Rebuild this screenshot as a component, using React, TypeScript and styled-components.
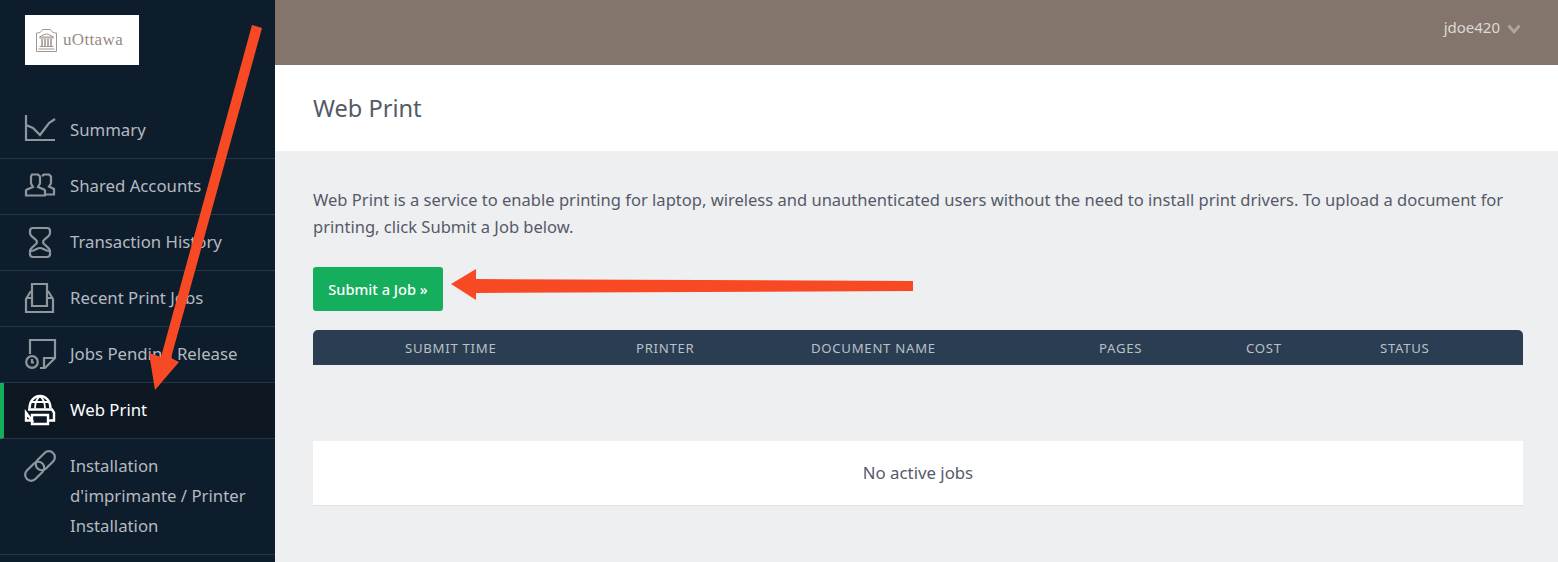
import React from "react";
import styled, { createGlobalStyle } from "styled-components";

const FONT = `"Noto Sans", "Open Sans", sans-serif`;

const GlobalStyle = createGlobalStyle`
  html, body {
    margin: 0;
    padding: 0;
    height: 100%;
    overflow: hidden;
    background: #eeeff1;
  }
  body {
    font-family: ${FONT};
  }
`;

const Page = styled.div`
  position: relative;
  display: flex;
  width: 1558px;
  height: 562px;
  overflow: hidden;
`;

const Sidebar = styled.aside`
  width: 275px;
  flex-shrink: 0;
  background: #0e1d2c;
  display: flex;
  flex-direction: column;
`;

const LogoArea = styled.div`
  height: 103px;
  padding: 15px 0 0 25px;
  box-sizing: border-box;
`;

const LogoBox = styled.div`
  width: 114px;
  height: 50px;
  background: #fff;
  display: flex;
  align-items: center;
  padding-left: 11px;
  box-sizing: border-box;
  gap: 6px;
`;

const LogoText = styled.span`
  font-family: "Liberation Serif", serif;
  font-size: 17px;
  color: #958a82;
  letter-spacing: 0.35px;
`;

const Nav = styled.nav`
  display: flex;
  flex-direction: column;
`;

const NavItem = styled.a<{ $active?: boolean; $tall?: boolean }>`
  display: flex;
  align-items: flex-start;
  box-sizing: border-box;
  min-height: ${(p) => (p.$tall ? "116px" : "56px")};
  padding: 12px 20px 0 ${(p) => (p.$active ? "21px" : "25px")};
  border-bottom: 1px solid #25364a;
  border-left: ${(p) => (p.$active ? "4px solid #14ae5c" : "none")};
  background: ${(p) => (p.$active ? "#0d1822" : "transparent")};
  color: ${(p) => (p.$active ? "#ffffff" : "#b4bac0")};
  font-size: 16.75px;
  line-height: 30px;
`;

const NavIcon = styled.svg<{ $active?: boolean }>`
  width: 30px;
  height: 30px;
  margin-right: 15px;
  flex-shrink: 0;
  overflow: visible;
  fill: none;
  stroke: ${(p) => (p.$active ? "#ffffff" : "#8f979e")};
  stroke-width: ${(p) => (p.$active ? 2.4 : 2.2)};
`;

const Main = styled.main`
  flex: 1;
  display: flex;
  flex-direction: column;
  min-width: 0;
`;

const TopBar = styled.header`
  height: 65px;
  background: #83756c;
  display: flex;
  align-items: center;
  justify-content: flex-end;
  padding: 0 37px 11px 0;
  box-sizing: border-box;
  gap: 7px;
  color: #ddd9d5;
  font-size: 15px;
`;

const Chevron = styled.svg`
  margin-top: 3px;
  fill: none;
  stroke: #aea69f;
  stroke-width: 2.8;
`;

const TitleBar = styled.div`
  height: 86px;
  background: #fff;
  box-sizing: border-box;
  padding: 0 38px 1px;
  display: flex;
  align-items: center;
`;

const Title = styled.h1`
  margin: 0;
  font-size: 23.6px;
  font-weight: 400;
  color: #555a68;
`;

const Content = styled.div`
  padding: 35px 35px 0 38px;
  color: #555a68;
`;

const Intro = styled.p`
  margin: 0 0 27px;
  font-size: 16.54px;
  line-height: 27px;
`;

const SubmitButton = styled.button`
  display: block;
  width: 130px;
  height: 44px;
  border: none;
  border-radius: 3px;
  background: #14ae5c;
  color: #fff;
  font-family: ${FONT};
  font-size: 14.6px;
  font-weight: 500;
  padding: 0;
  margin-bottom: 19px;
`;

const TableHead = styled.div`
  height: 35px;
  background: #2a3d52;
  border-radius: 5px 5px 0 0;
  display: grid;
  grid-template-columns: 231px 175px 288px 147px 134px auto;
  padding-left: 92px;
  align-items: center;
  color: #b9c0c8;
  font-size: 13.2px;
  letter-spacing: 0.7px;
`;

const EmptyRow = styled.div`
  margin-top: 76px;
  height: 65px;
  padding-bottom: 2px;
  background: #fff;
  border-bottom: 1px solid #e2e3e5;
  box-sizing: border-box;
  display: flex;
  align-items: center;
  justify-content: center;
  font-size: 16.8px;
  color: #555a68;
`;

const ArrowLayer = styled.svg`
  position: absolute;
  inset: 0;
  width: 1558px;
  height: 562px;
  pointer-events: none;
`;

const SummaryIcon = () => (
  <NavIcon viewBox="0 0 30 30">
    <path d="M1 0v25h29" />
    <path d="M1 10l7 3 7 7 9-12 6-4" />
  </NavIcon>
);

const AccountsIcon = () => (
  <NavIcon viewBox="0 0 30 30">
    <path d="M7 3.500h6l2 2v7l-2 3.500 6 2.500 1 1v5H1v-5l1-1 6-2.500-2-3.500v-7z" />
    <path d="M17 5l2-1.500h5l2 2v7l-2 3 5 2.500v5.500h-9" />
  </NavIcon>
);

const HistoryIcon = () => (
  <NavIcon viewBox="0 0 30 30">
    <path d="M8 1h14q3 0 3 3v2c0 4-7 6-7 9 0 3 7 5 7 9v3q0 3-3 3H8q-3 0-3-3v-3c0-4 7-6 7-9 0-3-7-5-7-9V4q0-3 3-3z" />
    <path d="M6 24c4 0 6-3 9-3s5 3 9 3" />
  </NavIcon>
);

const InboxIcon = () => (
  <NavIcon viewBox="0 0 30 30">
    <path d="M7 15V1h15v14" />
    <path d="M6 8l-5 8v13h27V16l-5-8" />
    <path d="M2 15h5v8h15v-8h5" />
  </NavIcon>
);

const PendingIcon = () => (
  <NavIcon viewBox="0 0 30 30">
    <path d="M5 15V1h25v18L20 29h-5" />
    <path d="M30 19H19v10" />
    <circle cx="7" cy="23" r="5.800" />
    <path d="M7 20v3.500h2" />
  </NavIcon>
);

const WebPrintIcon = () => (
  <NavIcon viewBox="0 0 30 30" $active>
    <path d="M4.500 13.500C4.500 6 9 1 15 1s10.500 5 10.500 12.500" />
    <path d="M15 1c-3.500 3-5 7.500-5 12.500M15 1c3.500 3 5 7.500 5 12.500M6 7h18" strokeWidth="1.800" />
    <path d="M3 14.500h24l2 3v8h-6M7 25.500H1v-8z" />
    <path d="M7 20h16v9H7z" />
  </NavIcon>
);

const LinkIcon = () => (
  <NavIcon viewBox="0 0 30 30">
    <rect x="9.300" y="3.700" width="22" height="12" rx="6" transform="rotate(-45 20.300 9.700)" />
    <rect x="-1.300" y="14.300" width="22" height="12" rx="6" transform="rotate(-45 9.700 20.300)" />
  </NavIcon>
);

const Building = () => (
  <svg width="21" height="24" viewBox="0 0 21 24" fill="none" stroke="#a2978f" strokeWidth="1">
    <path d="M0.500 23.500V5c3 0 5-1 6-3.500h8c1 2.500 3 3.500 6 3.500v18.500z" />
    <path d="M3.500 9c2-1 5-3 7-3s5 2 7 3zM3.500 10h14M3.500 18.500h14M2.500 21h16" />
    <path d="M6 11v7M9 11v7M12 11v7M15 11v7" strokeWidth="1.600" />
  </svg>
);

const columns = ["SUBMIT TIME", "PRINTER", "DOCUMENT NAME", "PAGES", "COST", "STATUS"];

export default function App() {
  return (
    <Page>
      <GlobalStyle />
      <Sidebar>
        <LogoArea>
          <LogoBox>
            <Building />
            <LogoText>uOttawa</LogoText>
          </LogoBox>
        </LogoArea>
        <Nav>
          <NavItem><SummaryIcon />Summary</NavItem>
          <NavItem><AccountsIcon />Shared Accounts</NavItem>
          <NavItem><HistoryIcon />Transaction History</NavItem>
          <NavItem><InboxIcon />Recent Print Jobs</NavItem>
          <NavItem><PendingIcon />Jobs Pending Release</NavItem>
          <NavItem $active><WebPrintIcon />Web Print</NavItem>
          <NavItem $tall>
            <LinkIcon />
            <span>Installation d'imprimante / Printer Installation</span>
          </NavItem>
        </Nav>
      </Sidebar>
      <Main>
        <TopBar>
          <span>jdoe420</span>
          <Chevron width="14" height="10" viewBox="0 0 14 10">
            <path d="M1.500 1.500L7 8l5.500-6.500" />
          </Chevron>
        </TopBar>
        <TitleBar>
          <Title>Web Print</Title>
        </TitleBar>
        <Content>
          <Intro>
            Web Print is a service to enable printing for laptop, wireless and unauthenticated users without the need
            to install print drivers. To upload a document for printing, click Submit a Job below.
          </Intro>
          <SubmitButton>Submit a Job »</SubmitButton>
          <TableHead>
            {columns.map((c) => (
              <span key={c}>{c}</span>
            ))}
          </TableHead>
          <EmptyRow>No active jobs</EmptyRow>
        </Content>
      </Main>
      <ArrowLayer viewBox="0 0 1558 562">
        <polygon fill="#f74a24" points="252,25 262,28 171,358 179,362 155,390 149,353 161,357" />
        <polygon fill="#f74a24" points="451,284 476,269 476,279 913,281 913,291 476,293 476,300" />
      </ArrowLayer>
    </Page>
  );
}
